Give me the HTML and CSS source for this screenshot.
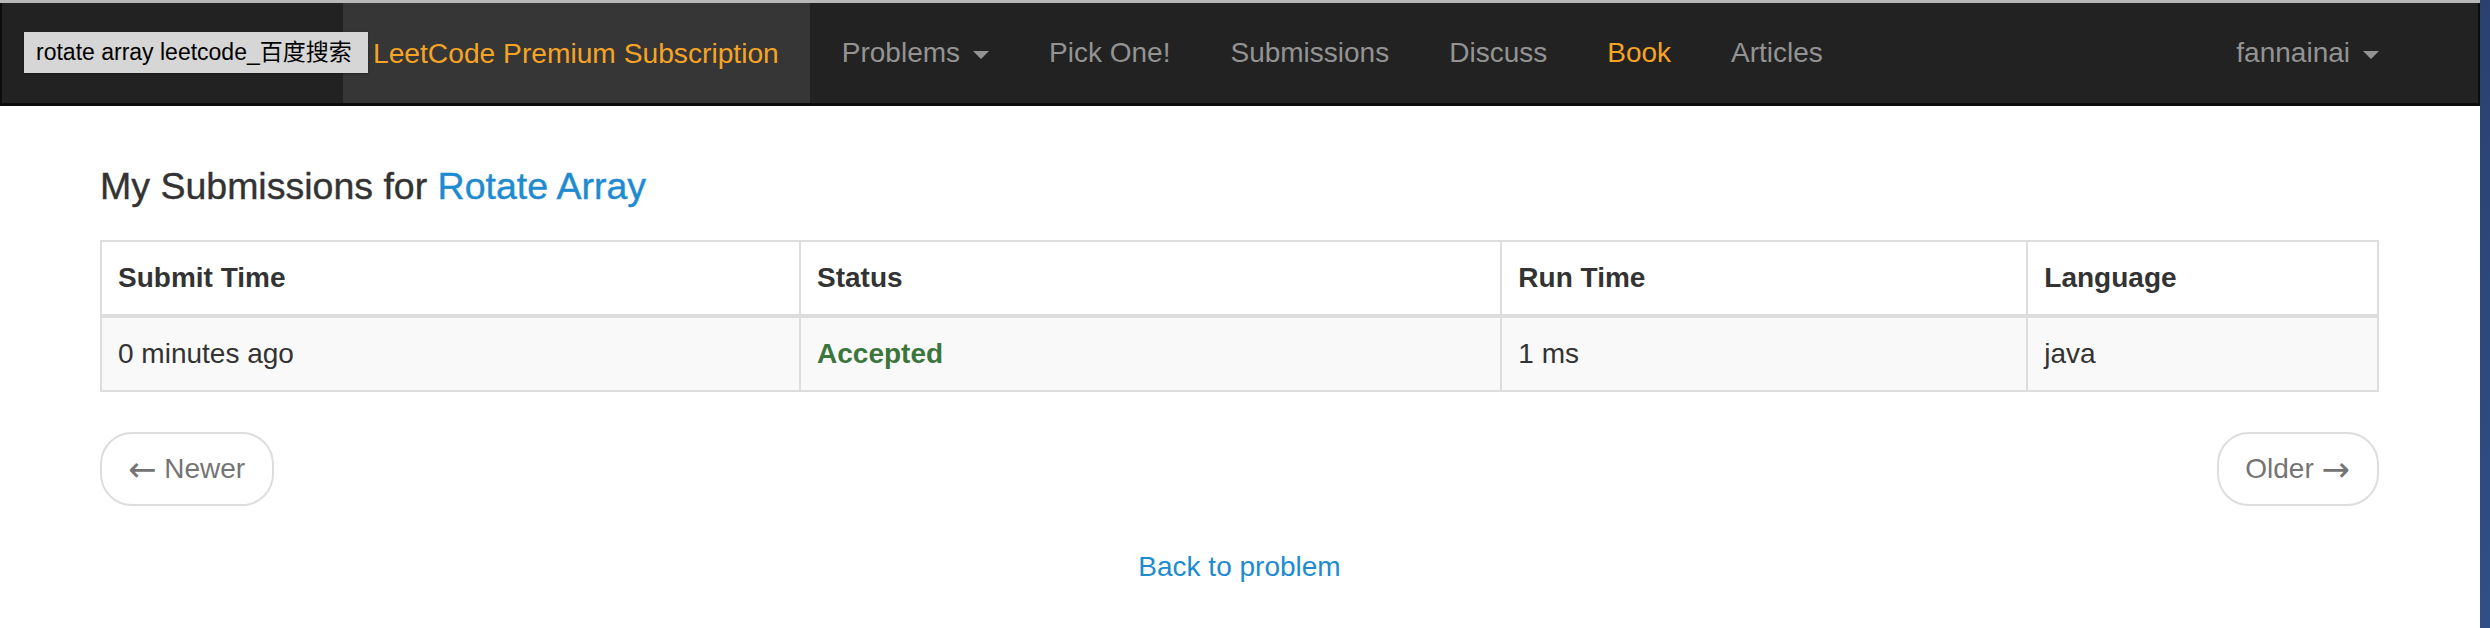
FILE: index.html
```html
<!DOCTYPE html>
<html>
<head>
<meta charset="utf-8">
<title>My Submissions</title>
<link rel="stylesheet" href="styles.css">
</head>
<body>
<div class="page">
  <div class="main">
    <div class="topline"></div>
    <nav class="navbar">
      <a class="brand" href="#">LeetCode Premium Subscription</a>
      <ul class="nav">
        <li><a href="#">Problems<span class="caret"></span></a></li>
        <li><a href="#">Pick One!</a></li>
        <li><a href="#">Submissions</a></li>
        <li><a href="#">Discuss</a></li>
        <li><a href="#" class="orange">Book</a></li>
        <li><a href="#">Articles</a></li>
      </ul>
      <ul class="nav nav-right">
        <li><a href="#">fannainai<span class="caret"></span></a></li>
      </ul>
      <div class="tooltip">rotate array leetcode_百度搜索</div>
    </nav>
    <div class="content">
      <h1 class="title">My Submissions for <a href="#">Rotate Array</a></h1>
      <table class="subs">
        <thead>
          <tr>
            <th class="c-time">Submit Time</th>
            <th class="c-status">Status</th>
            <th class="c-run">Run Time</th>
            <th class="c-lang">Language</th>
          </tr>
        </thead>
        <tbody>
          <tr>
            <td>0 minutes ago</td>
            <td><a href="#" class="accepted">Accepted</a></td>
            <td>1 ms</td>
            <td>java</td>
          </tr>
        </tbody>
      </table>
      <div class="pager">
        <a href="#" class="pager-btn"><span class="arrow">&larr;</span> Newer</a>
        <a href="#" class="pager-btn">Older <span class="arrow">&rarr;</span></a>
      </div>
      <div class="back"><a href="#">Back to problem</a></div>
    </div>
  </div>
  <div class="side-strip"></div>
</div>
</body>
</html>
```

FILE: styles.css
```css
* { box-sizing: border-box; }
html, body { margin: 0; padding: 0; }
body {
  background: #fff;
  font-family: "Liberation Sans", Arial, "Noto Sans CJK SC", sans-serif;
  font-size: 28px;
  color: #333;
  width: 2490px;
  height: 628px;
  overflow: hidden;
}
a { text-decoration: none; }

.page { display: flex; height: 628px; }
.main { flex: 1; min-width: 0; }
.side-strip {
  width: 10px;
  background: linear-gradient(#2a4170, #2f4f86);
}

.topline { height: 3px; background: #b8b8b8; }

.navbar {
  position: relative;
  display: flex;
  align-items: stretch;
  height: 103px;
  background: #222;
  border-left: 2px solid #0c0c0c;
  border-right: 2px solid #0c0c0c;
  border-bottom: 3px solid #0c0c0c;
  padding-left: 341px;
  padding-right: 69px;
}
.brand {
  display: flex;
  align-items: center;
  background: #363636;
  color: #f5a425;
  padding: 0 31px 0 30px;
  font-size: 28.2px;
}
.nav {
  display: flex;
  list-style: none;
  margin: 0 0 0 2px;
  padding: 0;
}
.nav li { display: flex; }
.nav a {
  display: flex;
  align-items: center;
  padding: 0 30px;
  color: #939393;
  font-size: 28px;
}
.nav a.orange { color: #f5a425; }
.nav-right { margin-left: auto; }
.caret {
  display: inline-block;
  margin-left: 13px;
  margin-top: 3px;
  width: 0;
  height: 0;
  border-top: 8px solid #939393;
  border-left: 8px solid transparent;
  border-right: 8px solid transparent;
}

.tooltip {
  position: absolute;
  left: 22px;
  top: 29px;
  width: 344px;
  height: 41px;
  background: #d6d6d6;
  color: #000;
  font-size: 23px;
  line-height: 41px;
  padding-left: 12px;
  white-space: nowrap;
  box-shadow: 0 1px 2px rgba(0,0,0,0.3);
}

.content { padding: 59px 101px 0 100px; }
.title {
  margin: 0 0 33px;
  font-size: 37.5px;
  line-height: 42px;
  font-weight: normal;
  color: #333;
  -webkit-text-stroke: 0.4px #333;
}
.title a { color: #1e8bd1; -webkit-text-stroke: 0.4px #1e8bd1; }

.subs {
  width: 100%;
  border-collapse: collapse;
  table-layout: fixed;
  border: 2px solid #ddd;
}
.subs th, .subs td {
  border: 2px solid #ddd;
  padding: 16px;
  line-height: 40px;
  font-size: 28px;
  text-align: left;
  color: #333;
}
.subs th { font-weight: bold; border-bottom: 4px solid #ddd; }
.subs tbody tr { background: #f9f9f9; }
.c-time { width: 30.7%; }
.c-status { width: 30.8%; }
.c-run { width: 23.1%; }
.accepted { color: #3c763d; font-weight: bold; }

.pager {
  display: flex;
  justify-content: space-between;
  margin-top: 40px;
}
.pager-btn {
  display: inline-block;
  border: 2px solid #ddd;
  border-radius: 32px;
  padding: 15px 27px 15px 26px;
  line-height: 40px;
  font-size: 28px;
  color: #747474;
  background: #fff;
}
.arrow { font-family: "DejaVu Sans", sans-serif; font-size: 34px; line-height: 40px; vertical-align: top; }

.back {
  text-align: center;
  margin-top: 41px;
  line-height: 40px;
}
.back a { color: #1e8bd1; font-size: 28px; }
```
